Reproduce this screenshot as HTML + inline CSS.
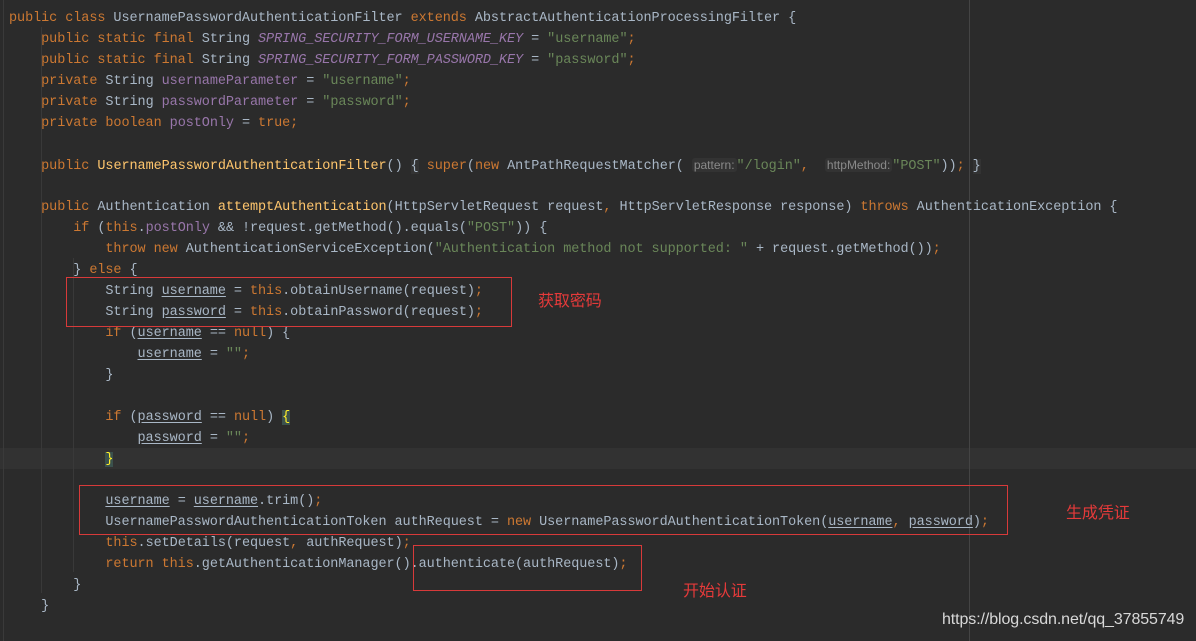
<!DOCTYPE html>
<html><head><meta charset="utf-8"><style>
body{margin:0;width:1196px;height:641px;background:#2b2b2b;overflow:hidden;position:relative;font-family:"Liberation Mono",monospace;font-size:13.5px;letter-spacing:-0.07px;color:#a9b7c6}
.l{position:absolute;left:9px;white-space:pre;height:21px;line-height:21px;margin-top:1px}
.k{color:#cc7832}.c{color:#9876aa;font-style:italic}.f{color:#9876aa}.s{color:#6a8759}.m{color:#ffc66d}
.u{text-decoration:underline;text-underline-offset:2px}
.h{font-family:"Liberation Sans",sans-serif;font-size:12px;color:#8a8a8a;background:#333;padding:0 2px;border-radius:3px;letter-spacing:0}
.box{position:absolute;border:1px solid #d83a3a}
.r{position:absolute;color:#e53a3a;font-family:"Liberation Sans","Noto Sans CJK SC",sans-serif;font-size:16px}
.g{position:absolute;top:0;bottom:0;width:1px;background:#393939}
</style></head><body>
<div style="position:absolute;left:0;top:448px;width:1196px;height:21px;background:#323232"></div>
<div class="g" style="left:969px;background:#444"></div>
<div class="g" style="left:3px;background:#3a3a3a"></div>
<div class="g" style="left:41px;top:27px;bottom:48px"></div>
<div class="g" style="left:73px;top:258px;bottom:69px"></div>
<div class="l" style="top:7px"><span class="k">public class</span> UsernamePasswordAuthenticationFilter <span class="k">extends</span> AbstractAuthenticationProcessingFilter {</div>
<div class="l" style="top:28px">    <span class="k">public static final</span> String <span class="c">SPRING_SECURITY_FORM_USERNAME_KEY</span> = <span class="s">"username"</span><span class="k">;</span></div>
<div class="l" style="top:49px">    <span class="k">public static final</span> String <span class="c">SPRING_SECURITY_FORM_PASSWORD_KEY</span> = <span class="s">"password"</span><span class="k">;</span></div>
<div class="l" style="top:70px">    <span class="k">private</span> String <span class="f">usernameParameter</span> = <span class="s">"username"</span><span class="k">;</span></div>
<div class="l" style="top:91px">    <span class="k">private</span> String <span class="f">passwordParameter</span> = <span class="s">"password"</span><span class="k">;</span></div>
<div class="l" style="top:112px">    <span class="k">private boolean</span> <span class="f">postOnly</span> = <span class="k">true;</span></div>
<div class="l" style="top:154px">    <span class="k">public</span> <span class="m">UsernamePasswordAuthenticationFilter</span>() <span style="background:#333">{</span> <span class="k">super</span>(<span class="k">new</span> AntPathRequestMatcher( <span class="h">pattern:</span><span class="s">"/login"</span><span class="k">,</span>  <span class="h">httpMethod:</span><span class="s">"POST"</span>))<span class="k">;</span> <span style="background:#333">}</span></div>
<div class="l" style="top:196px">    <span class="k">public</span> Authentication <span class="m">attemptAuthentication</span>(HttpServletRequest request<span class="k">,</span> HttpServletResponse response) <span class="k">throws</span> AuthenticationException {</div>
<div class="l" style="top:217px">        <span class="k">if</span> (<span class="k">this</span>.<span class="f">postOnly</span> &amp;&amp; !request.getMethod().equals(<span class="s">"POST"</span>)) {</div>
<div class="l" style="top:238px">            <span class="k">throw new</span> AuthenticationServiceException(<span class="s">"Authentication method not supported: "</span> + request.getMethod())<span class="k">;</span></div>
<div class="l" style="top:259px">        } <span class="k">else</span> {</div>
<div class="l" style="top:280px">            String <span class="u">username</span> = <span class="k">this</span>.obtainUsername(request)<span class="k">;</span></div>
<div class="l" style="top:301px">            String <span class="u">password</span> = <span class="k">this</span>.obtainPassword(request)<span class="k">;</span></div>
<div class="l" style="top:322px">            <span class="k">if</span> (<span class="u">username</span> == <span class="k">null</span>) {</div>
<div class="l" style="top:343px">                <span class="u">username</span> = <span class="s">""</span><span class="k">;</span></div>
<div class="l" style="top:364px">            }</div>
<div class="l" style="top:406px">            <span class="k">if</span> (<span class="u">password</span> == <span class="k">null</span>) <span style="color:#ffef28;background:#3b514d">{</span></div>
<div class="l" style="top:427px">                <span class="u">password</span> = <span class="s">""</span><span class="k">;</span></div>
<div class="l" style="top:448px">            <span style="color:#ffef28;background:#3b514d">}</span></div>
<div class="l" style="top:490px">            <span class="u">username</span> = <span class="u">username</span>.trim()<span class="k">;</span></div>
<div class="l" style="top:511px">            UsernamePasswordAuthenticationToken authRequest = <span class="k">new</span> UsernamePasswordAuthenticationToken(<span class="u">username</span><span class="k">,</span> <span class="u">password</span>)<span class="k">;</span></div>
<div class="l" style="top:532px">            <span class="k">this</span>.setDetails(request<span class="k">,</span> authRequest)<span class="k">;</span></div>
<div class="l" style="top:553px">            <span class="k">return this</span>.getAuthenticationManager().authenticate(authRequest)<span class="k">;</span></div>
<div class="l" style="top:574px">        }</div>
<div class="l" style="top:595px">    }</div>
<div class="box" style="left:66px;top:277px;width:444px;height:48px"></div>
<div class="box" style="left:79px;top:485px;width:927px;height:48px"></div>
<div class="box" style="left:413px;top:545px;width:227px;height:44px"></div>
<div class="r" style="left:538px;top:287px">获取密码</div>
<div class="r" style="left:1066px;top:499px">生成凭证</div>
<div class="r" style="left:683px;top:577px">开始认证</div>
<div style="position:absolute;left:942px;top:611px;font-family:'Liberation Sans',sans-serif;font-size:16px;letter-spacing:-0.1px;color:#d8d8d8">https://blog.csdn.net/qq_37855749</div>
</body></html>
